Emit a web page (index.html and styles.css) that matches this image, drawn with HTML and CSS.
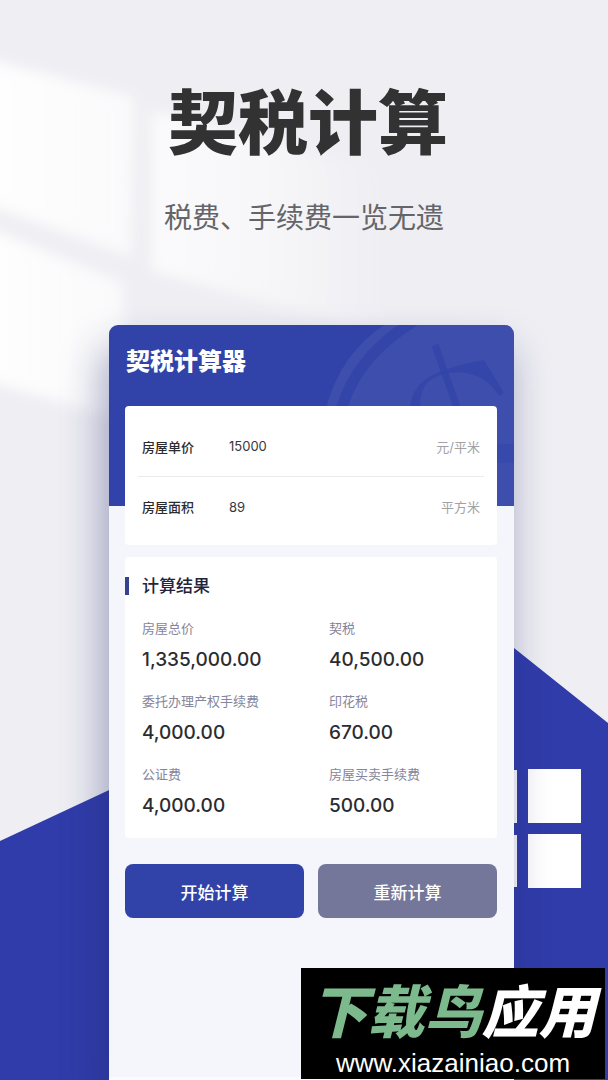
FILE: index.html
```html
<!DOCTYPE html>
<html lang="zh-CN">
<head>
    <meta charset="UTF-8">
    <meta name="viewport" content="width=device-width, initial-scale=1.0">
    <title>契税计算</title>
    <link rel="stylesheet" href="styles.css">
</head>
<body>
    <!-- Window light, house roof and window panes -->
    <svg class="backdrop" viewBox="0 0 608 1080" preserveAspectRatio="xMidYMin slice" aria-hidden="true">
        <defs>
            <filter id="soft" x="-20%" y="-20%" width="140%" height="140%">
                <feGaussianBlur stdDeviation="7"/>
            </filter>
            <linearGradient id="fade" x1="0" x2="1">
                <stop offset="0" stop-color="#fff" stop-opacity=".75"/>
                <stop offset=".5" stop-color="#fff" stop-opacity=".5"/>
                <stop offset="1" stop-color="#fff" stop-opacity="0"/>
            </linearGradient>
            <linearGradient id="glow" x1="0" x2="1">
                <stop offset="0" stop-color="#fff"/>
                <stop offset="1" stop-color="#fff" stop-opacity=".7"/>
            </linearGradient>
        </defs>
        <g filter="url(#soft)">
            <polygon points="-40,52 135,96 132,258 -40,195" fill="url(#glow)"/>
            <polygon points="151,110 390,170 390,335 151,272" fill="url(#fade)"/>
            <polygon points="-40,216 124,282 124,420 -40,374" fill="url(#glow)"/>
        </g>
        <polygon points="0,841 304,699 304,1080 0,1080" fill="#303ca9"/>
        <polygon points="304,480 514,648 608,723 608,1080 304,1080" fill="#303ca9"/>
        <path d="M463 770h54v53h-54zM463 835h54v52h-54zM528 769h53v54h-53zM528 834h53v54h-53z" fill="#fff"/>
    </svg>

    <header class="intro">
        <h1>契税计算</h1>
        <p>税费、手续费一览无遗</p>
    </header>

    <main class="phone">
        <div class="banner">
            <svg class="emblem" viewBox="0 0 204 181" aria-hidden="true">
                <path d="M12 181Q4 120 17 80Q31 29 74 0H204V181z" fill="#fff" fill-opacity=".06"/>
                <path d="M28 181Q20 120 32 82Q48 30 104 -4" fill="none" stroke="#3143a8" stroke-opacity=".8" stroke-width="11"/>
                <path d="M125 20l24 68" fill="none" stroke="#3143a8" stroke-opacity=".7" stroke-width="7"/>
                <path d="M100 84C102 56 122 45 174 35L194 68L189 71C176 49 152 43 130 50C114 56 110 66 110 84z" fill="#3143a8" fill-opacity=".7"/>
                <path d="M180 119h24v19h-24z" fill="#3143a8" fill-opacity=".5"/>
            </svg>
            <h2>契税计算器</h2>
        </div>

        <form id="tax-form">
            <div class="panel inputs">
                <div class="row">
                    <label for="price">房屋单价</label>
                    <input type="text" id="price" value="15000">
                    <span class="unit">元/平米</span>
                </div>
                <div class="row">
                    <label for="area">房屋面积</label>
                    <input type="text" id="area" value="89">
                    <span class="unit">平方米</span>
                </div>
            </div>

            <section class="panel results">
                <h3>计算结果</h3>
                <dl>
                    <div><dt>房屋总价</dt><dd>1,335,000.00</dd></div>
                    <div><dt>契税</dt><dd>40,500.00</dd></div>
                    <div><dt>委托办理产权手续费</dt><dd>4,000.00</dd></div>
                    <div><dt>印花税</dt><dd>670.00</dd></div>
                    <div><dt>公证费</dt><dd>4,000.00</dd></div>
                    <div><dt>房屋买卖手续费</dt><dd>500.00</dd></div>
                </dl>
            </section>

            <div class="actions">
                <button type="button" class="start">开始计算</button>
                <button type="button" class="again">重新计算</button>
            </div>
        </form>
    </main>

    <aside class="stamp">
        <div class="stamp-name"><span>下载鸟</span>应用</div>
        <div class="stamp-url">www.xiazainiao.com</div>
    </aside>
</body>
</html>
```
FILE: styles.css
```css
* {
    box-sizing: border-box;
}
body {
    position: relative;
    display: flex;
    flex-direction: column;
    min-height: 100vh;
    margin: 0;
    overflow: hidden;
    background: #eeeef3;
    color: #2c2c30;
    font-family: Inter, "Noto Sans CJK SC", sans-serif;
}
h1, h2, h3, p, dl, dd {
    margin: 0;
}
.backdrop {
    position: absolute;
    top: 0;
    left: 0;
    width: 100%;
    height: 100%;
}
.intro {
    position: relative;
    padding-top: 72px;
    height: 325px;
    text-align: center;
}
h1 {
    padding-left: 8px;
    font-size: 70px;
    font-weight: 900;
    line-height: 104px;
    color: #323233;
}
.intro p {
    margin-top: 22px;
    font-size: 28px;
    line-height: 40px;
    color: #656569;
}

.phone {
    position: relative;
    flex: 1;
    margin: 0 94px 0 109px;
    border-bottom: 3px solid #fbfbfd;
    border-radius: 9px 9px 0 0;
    background: #f5f6fb;
    box-shadow: -6px 24px 40px rgba(36, 40, 110, 0.4);
}
.banner {
    position: relative;
    height: 181px;
    padding: 22px 17px;
    overflow: hidden;
    border-radius: 9px 9px 0 0;
    background: #3143a8;
}
.emblem {
    position: absolute;
    top: 0;
    right: 0;
    width: 204px;
    height: 181px;
}
h2 {
    position: relative;
    font-size: 24px;
    font-weight: 900;
    line-height: 30px;
    color: #fff;
}

/* The form overlaps the lower part of the banner */
form {
    position: relative;
    margin-top: -100px;
    padding: 0 17px 0 16px;
}
.panel {
    border-radius: 4px;
    background: #fff;
}
.inputs {
    padding: 10px 13px 9px;
}
.row {
    display: flex;
    align-items: center;
    height: 60px;
    padding: 0 4px;
    font-size: 13px;
}
.row + .row {
    border-top: 1px solid #ebebed;
}
.row label {
    width: 87px;
    font-weight: 500;
}
.row input {
    flex: 1;
    min-width: 0;
    padding: 0;
    border: 0;
    outline: none;
    background: none;
    color: #38383c;
    font: inherit;
}
.unit {
    color: #a2a2a6;
}

.results {
    margin-top: 12px;
    padding: 16px 0 18px;
}
h3 {
    display: flex;
    align-items: center;
    gap: 13px;
    font-size: 17px;
    font-weight: 500;
    line-height: 26px;
    color: #23233c;
}
h3::before {
    content: "";
    width: 4px;
    height: 18px;
    background: #36418f;
}
dl {
    display: grid;
    grid-template-columns: 1fr 1fr;
    row-gap: 17px;
    column-gap: 19px;
    padding: 19px 0 0 17px;
}
dt {
    font-size: 13px;
    line-height: 20px;
    color: #85859c;
}
dd {
    margin-top: 8px;
    font-size: 19px;
    font-weight: 500;
    line-height: 28px;
}

.actions {
    display: grid;
    grid-template-columns: 1fr 1fr;
    gap: 14px;
    margin-top: 26px;
}
button {
    height: 54px;
    border: 0;
    border-radius: 8px;
    color: #fff;
    font-family: inherit;
    font-size: 17px;
    font-weight: 500;
    cursor: pointer;
}
.start {
    background: #3143a8;
}
.again {
    background: #74779a;
}

.stamp {
    position: absolute;
    right: 3px;
    bottom: 1px;
    width: 304px;
    height: 111px;
    padding-top: 18px;
    background: #000;
    color: #fff;
    text-align: center;
}
.stamp-name {
    font-size: 57px;
    font-style: italic;
    font-weight: 900;
    line-height: 54px;
    white-space: nowrap;
}
.stamp-name span {
    color: #7cb98c;
}
.stamp-url {
    margin-top: 8px;
    font-family: "Liberation Sans", sans-serif;
    font-size: 26px;
    line-height: 30px;
}
```
